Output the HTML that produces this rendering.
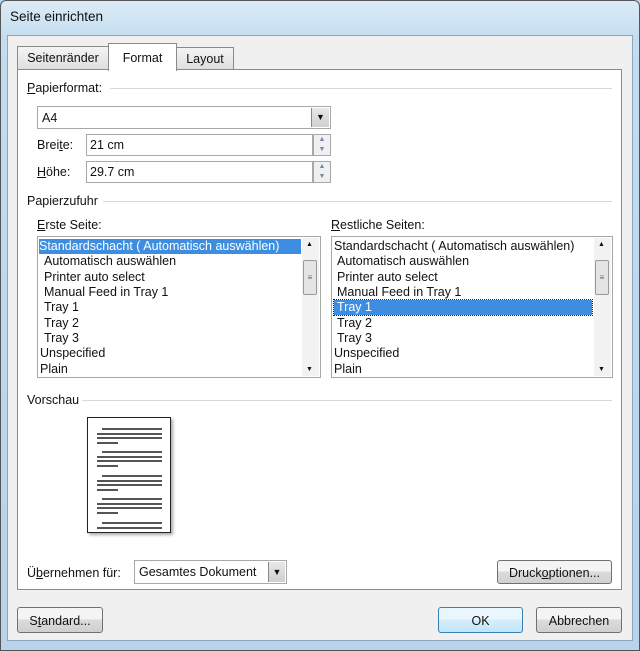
<!DOCTYPE html>
<html><head><meta charset="utf-8"><style>
*{box-sizing:border-box;margin:0;padding:0}
body{width:640px;height:651px;overflow:hidden;background:#bcd6ec;font-family:"Liberation Sans",sans-serif;font-size:12.5px;color:#111;position:relative}
.a{position:absolute}
.frame{left:0;top:0;width:640px;height:651px;background:linear-gradient(#dcebf7,#c3dcef 40px,#b8d3ea);border:1px solid #555;border-radius:6px 6px 0 0}
.body{left:7px;top:35px;width:626px;height:606px;background:#f0f0f0;border:1px solid #8ea6bd}
.tab{border:1px solid #8a8a8a;border-bottom:none;background:linear-gradient(#f4f4f4,#dedede);text-align:center;padding-top:4px}
.panel{left:17px;top:69px;width:605px;height:521px;background:#fff;border:1px solid #8a8a8a}
.line{height:1px;background:#d8d8d8}
.box{border:1px solid #a8a8a8;background:#fff}
.sel{background:#3d8ee0;color:#fff}
.btn{border:1px solid #707070;border-radius:3px;background:linear-gradient(#f4f4f4 45%,#dcdcdc 50%,#d0d0d0);text-align:center;line-height:24px}
.dd{background:linear-gradient(#e8e8e8,#cfcfcf);border-left:1px solid #888;font-size:9px;text-align:center}
.row{position:absolute;left:0;height:15px;line-height:15px;white-space:nowrap}
.sb{position:absolute;right:1px;top:1px;width:17px;bottom:1px;background:#f2f2f2}
.pl{position:absolute;height:2px;background:#555}
</style></head><body>
<div class="a frame"></div>
<div class="a" style="left:10px;top:9px;font-size:13.5px">Seite einrichten</div>
<div class="a body"></div>
<div class="a tab" style="left:17px;top:46px;width:92px;height:24px">Seitenränder</div>
<div class="a tab" style="left:176px;top:47px;width:58px;height:23px">Layout</div>
<div class="a panel"></div>
<div class="a tab" style="left:108px;top:43px;width:69px;height:28px;background:#fff;padding-top:7px">Format</div>

<div class="a" style="left:27px;top:81px"><u>P</u>apierformat:</div>
<div class="a line" style="left:110px;top:88px;width:502px"></div>
<div class="a box" style="left:37px;top:106px;width:294px;height:23px;padding:4px 4px">A4<div class="a dd" style="right:1px;top:1px;width:18px;height:19px;line-height:19px">▼</div></div>
<div class="a" style="left:37px;top:138px">Brei<u>t</u>e:</div>
<div class="a box" style="left:86px;top:134px;width:227px;height:22px;padding:3px 3px">21 cm</div>
<div class="a box" style="left:313px;top:134px;width:18px;height:22px;background:#eef0f3;font-size:7px;color:#789;text-align:center;line-height:10px">▲<br>▼</div>
<div class="a" style="left:37px;top:165px"><u>H</u>öhe:</div>
<div class="a box" style="left:86px;top:161px;width:227px;height:22px;padding:3px 3px">29.7 cm</div>
<div class="a box" style="left:313px;top:161px;width:18px;height:22px;background:#eef0f3;font-size:7px;color:#789;text-align:center;line-height:10px">▲<br>▼</div>

<div class="a" style="left:27px;top:194px">Papierzufuhr</div>
<div class="a line" style="left:103px;top:201px;width:509px"></div>

<div class="a" style="left:37px;top:218px"><u>E</u>rste Seite:</div>
<div class="a box" style="left:37px;top:236px;width:284px;height:142px;overflow:hidden">
<div class="row sel" style="top:2px;left:1px;width:262px">Standardschacht ( Automatisch auswählen)</div>
<div class="row" style="top:17px;left:6px">Automatisch auswählen</div>
<div class="row" style="top:33px;left:6px">Printer auto select</div>
<div class="row" style="top:48px;left:6px">Manual Feed in Tray 1</div>
<div class="row" style="top:63px;left:6px">Tray 1</div>
<div class="row" style="top:79px;left:6px">Tray 2</div>
<div class="row" style="top:94px;left:6px">Tray 3</div>
<div class="row" style="top:109px;left:2px">Unspecified</div>
<div class="row" style="top:125px;left:2px">Plain</div>
<div class="sb"><div class="a" style="left:4px;top:3px;font-size:7px">▲</div><div class="a" style="left:1px;top:22px;width:14px;height:35px;border:1px solid #999;border-radius:2px;background:#e4e4e4;font-size:8px;text-align:center;line-height:33px;color:#666">≡</div><div class="a" style="left:4px;bottom:3px;font-size:7px">▼</div></div>
</div>

<div class="a" style="left:331px;top:218px"><u>R</u>estliche Seiten:</div>
<div class="a box" style="left:331px;top:236px;width:282px;height:142px;overflow:hidden">
<div class="row" style="top:2px;left:2px">Standardschacht ( Automatisch auswählen)</div>
<div class="row" style="top:17px;left:5px">Automatisch auswählen</div>
<div class="row" style="top:33px;left:5px">Printer auto select</div>
<div class="row" style="top:48px;left:5px">Manual Feed in Tray 1</div>
<div class="row sel" style="top:63px;left:2px;width:258px;padding-left:3px;outline:1px dotted #222">Tray 1</div>
<div class="row" style="top:79px;left:5px">Tray 2</div>
<div class="row" style="top:94px;left:5px">Tray 3</div>
<div class="row" style="top:109px;left:2px">Unspecified</div>
<div class="row" style="top:125px;left:2px">Plain</div>
<div class="sb"><div class="a" style="left:4px;top:3px;font-size:7px">▲</div><div class="a" style="left:1px;top:22px;width:14px;height:35px;border:1px solid #999;border-radius:2px;background:#e4e4e4;font-size:8px;text-align:center;line-height:33px;color:#666">≡</div><div class="a" style="left:4px;bottom:3px;font-size:7px">▼</div></div>
</div>

<div class="a" style="left:27px;top:393px">Vorschau</div>
<div class="a line" style="left:82px;top:400px;width:530px"></div>
<div class="a" style="left:87px;top:417px;width:84px;height:116px;border:1px solid #222;background:#fff;box-shadow:2px 2px 3px #aaa">
<div class="pl" style="left:14px;top:10px;width:60px"></div><div class="pl" style="left:9px;top:15px;width:65px"></div><div class="pl" style="left:9px;top:19px;width:65px"></div><div class="pl" style="left:9px;top:24px;width:21px"></div>
<div class="pl" style="left:14px;top:33px;width:60px"></div><div class="pl" style="left:9px;top:38px;width:65px"></div><div class="pl" style="left:9px;top:42px;width:65px"></div><div class="pl" style="left:9px;top:47px;width:21px"></div>
<div class="pl" style="left:14px;top:57px;width:60px"></div><div class="pl" style="left:9px;top:62px;width:65px"></div><div class="pl" style="left:9px;top:66px;width:65px"></div><div class="pl" style="left:9px;top:71px;width:21px"></div>
<div class="pl" style="left:14px;top:80px;width:60px"></div><div class="pl" style="left:9px;top:85px;width:65px"></div><div class="pl" style="left:9px;top:89px;width:65px"></div><div class="pl" style="left:9px;top:94px;width:21px"></div>
<div class="pl" style="left:14px;top:104px;width:60px"></div><div class="pl" style="left:9px;top:109px;width:65px"></div>
</div>

<div class="a" style="left:27px;top:566px">Ü<u>b</u>ernehmen für:</div>
<div class="a box" style="left:134px;top:560px;width:153px;height:24px;padding:4px 4px">Gesamtes Dokument<div class="a dd" style="right:1px;top:1px;width:17px;height:20px;line-height:20px">▼</div></div>
<div class="a btn" style="left:497px;top:560px;width:115px;height:24px">Druck<u>o</u>ptionen...</div>

<div class="a btn" style="left:17px;top:607px;width:86px;height:26px;line-height:26px">S<u>t</u>andard...</div>
<div class="a btn" style="left:438px;top:607px;width:85px;height:26px;line-height:26px;border-color:#3c7fb1;background:linear-gradient(#eaf6fd 45%,#d7eefb 50%,#bee6fd)">OK</div>
<div class="a btn" style="left:536px;top:607px;width:86px;height:26px;line-height:26px">Abbrechen</div>
</body></html>
